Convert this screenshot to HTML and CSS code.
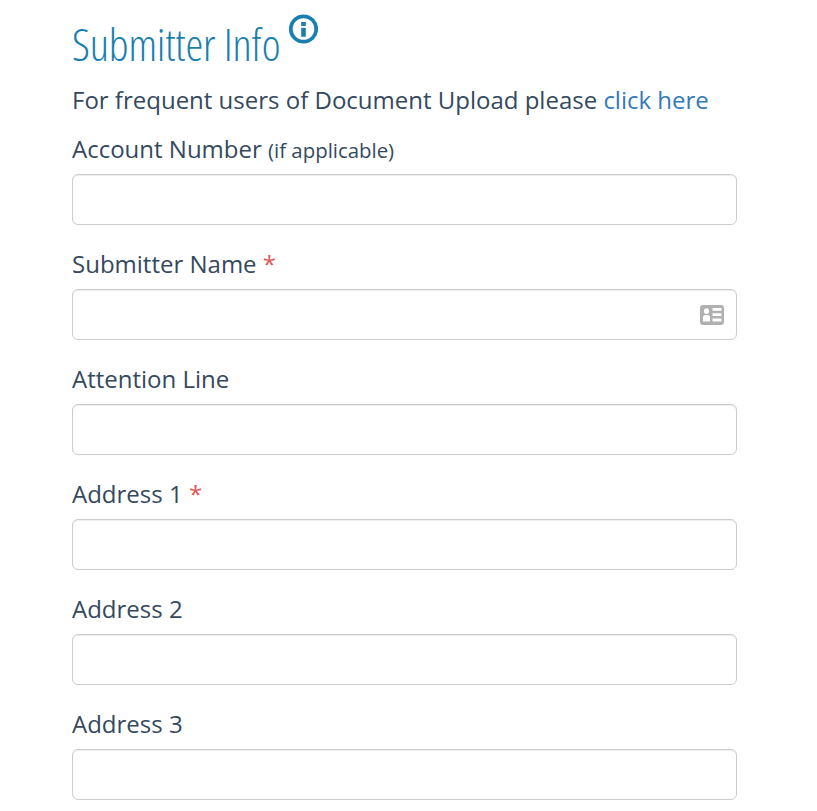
FILE: index.html
```html
<!DOCTYPE html>
<html lang="en">
<head>
<meta charset="utf-8">
<title>Submitter Info</title>
<link rel="stylesheet" href="styles.css">
</head>
<body>
<main class="form">
  <h1 class="title"><span class="title-text">Submitter Info</span>
    <svg class="info" viewBox="0 0 30 30" aria-hidden="true">
      <circle cx="15.500" cy="15" r="12.700" fill="none" stroke="#1a7fb0" stroke-width="3.800"/>
      <rect x="13.200" y="8" width="4.600" height="4" fill="#1a7fb0"/>
      <rect x="13.200" y="13.800" width="4.600" height="9" fill="#1a7fb0"/>
    </svg>
  </h1>
  <p class="intro">For frequent users of Document Upload please <a href="#">click here</a></p>
  <div class="field">
    <label class="label">Account Number <small>(if applicable)</small></label>
    <div class="input"></div>
  </div>
  <div class="field">
    <label class="label">Submitter Name <span class="req">*</span></label>
    <div class="input">
      <svg class="card" viewBox="0 0 24 20" aria-hidden="true">
        <path fill-rule="evenodd" fill="#b0b0b0" d="M3 0h18a3 3 0 0 1 3 3v14a3 3 0 0 1-3 3H3a3 3 0 0 1-3-3V3a3 3 0 0 1 3-3zM12.500 3v2.800h9V3zM12.500 8.300v2.800h9V8.300zM12.500 13.600v2.800h9v-2.800zM6.500 3.200a2.600 2.900 0 1 0 0 5.800a2.600 2.900 0 0 0 0-5.800zM3 16.600h7v-4.200c0-1.300-1-2.400-2-2.400H5c-1 0-2 1.100-2 2.400z"/>
      </svg>
    </div>
  </div>
  <div class="field">
    <label class="label">Attention Line</label>
    <div class="input"></div>
  </div>
  <div class="field">
    <label class="label">Address 1 <span class="req">*</span></label>
    <div class="input"></div>
  </div>
  <div class="field">
    <label class="label">Address 2</label>
    <div class="input"></div>
  </div>
  <div class="field">
    <label class="label">Address 3</label>
    <div class="input"></div>
  </div>
</main>
</body>
</html>
```
FILE: styles.css
```css
html, body {
  margin: 0;
  padding: 0;
  background: #fff;
  overflow: hidden;
}
body {
  height: 811px;
  font-family: "Open Sans", "Liberation Sans", sans-serif;
  color: #34495e;
}
.form {
  width: 665px;
  margin-left: 72px;
  padding-top: 13px;
}
.title {
  display: flex;
  align-items: flex-start;
  margin: 0;
  height: 70px;
  font-weight: 300;
  font-size: 45px;
  line-height: 62px;
  color: #1a7fb0;
}
.title-text {
  display: inline-block;
  font-stretch: 75%;
  letter-spacing: -0.14px;
  white-space: nowrap;
}
.info {
  width: 30px;
  height: 30px;
  margin-left: 8px;
  margin-top: 1px;
}
.intro {
  margin: 0 0 16px;
  font-size: 24px;
  line-height: 34px;
}
.intro a {
  color: #337ab7;
  text-decoration: none;
}
.field {
  height: 115px;
}
.label {
  display: block;
  font-size: 24px;
  line-height: 32px;
  height: 41px;
}
.label small {
  font-size: 20.400px;
}
.req {
  color: #e05555;
}
.input {
  box-sizing: border-box;
  height: 51px;
  border: 1px solid #ccc;
  border-radius: 6px;
  box-shadow: inset 0 1px 1px rgba(0, 0, 0, 0.075);
  display: flex;
  align-items: center;
  justify-content: flex-end;
  padding-right: 12px;
}
.card {
  width: 24px;
  height: 20px;
}
```
